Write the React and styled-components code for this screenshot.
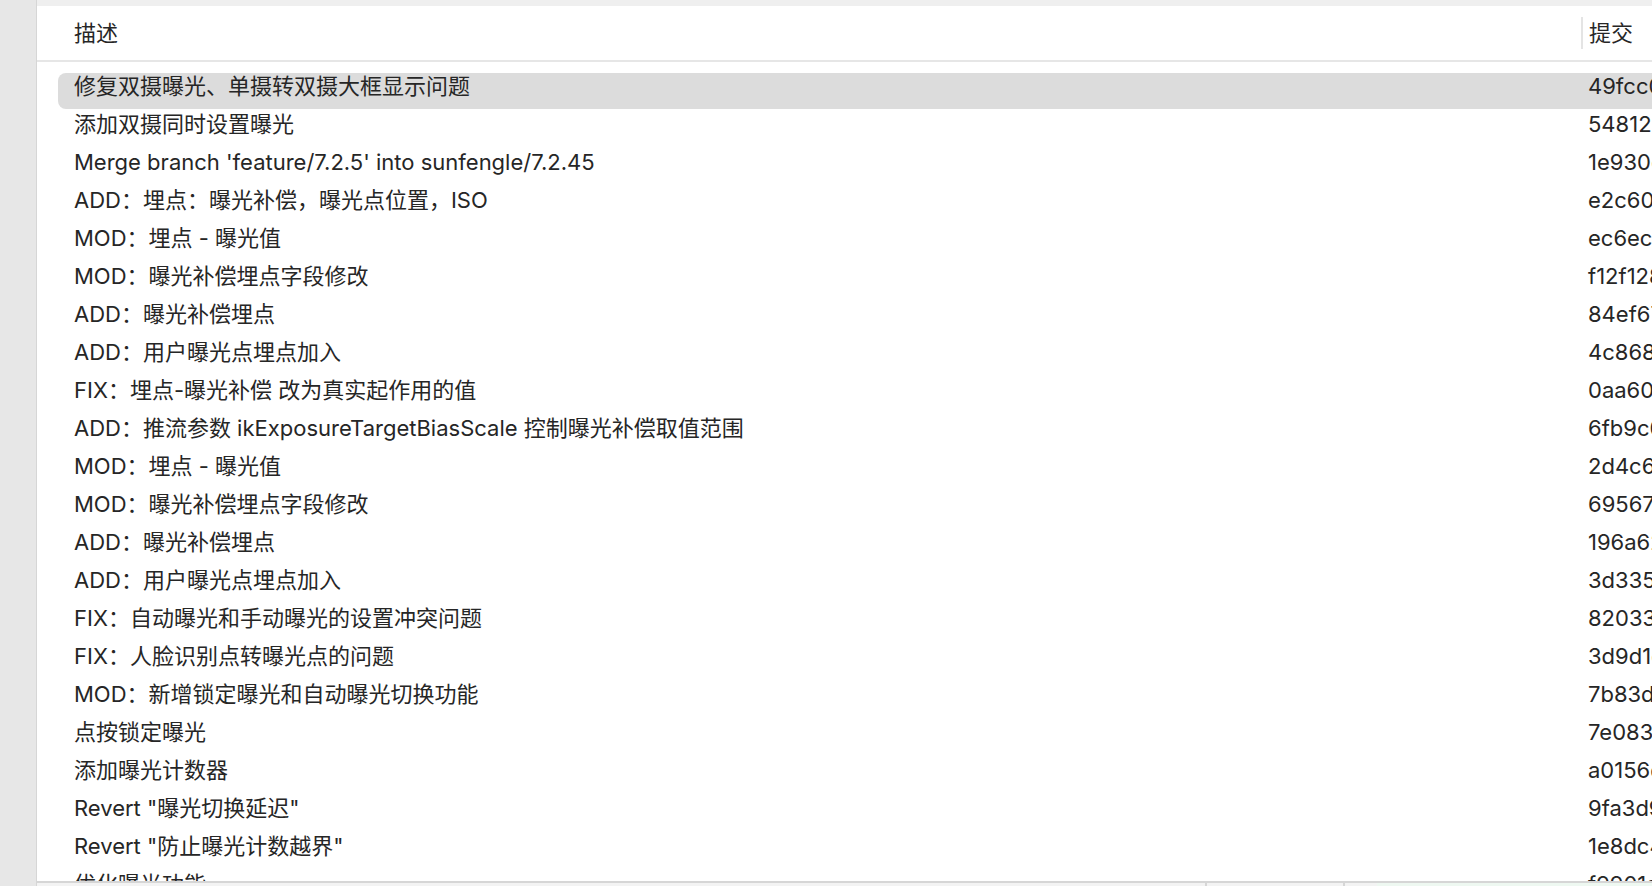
import React from 'react';
import styled, { createGlobalStyle } from 'styled-components';

const commits = [
  { message: '修复双摄曝光、单摄转双摄大框显示问题', hash: '49fcc0a1' },
  { message: '添加双摄同时设置曝光', hash: '54812e7b' },
  { message: "Merge branch 'feature/7.2.5' into sunfengle/7.2.45", hash: '1e930c4d' },
  { message: 'ADD：埋点：曝光补偿，曝光点位置，ISO', hash: 'e2c60f9a' },
  { message: 'MOD：埋点 - 曝光值', hash: 'ec6ec3b1' },
  { message: 'MOD：曝光补偿埋点字段修改', hash: 'f12f1287' },
  { message: 'ADD：曝光补偿埋点', hash: '84ef67c2' },
  { message: 'ADD：用户曝光点埋点加入', hash: '4c8688d0' },
  { message: 'FIX：埋点-曝光补偿 改为真实起作用的值', hash: '0aa60b5e' },
  { message: 'ADD：推流参数 ikExposureTargetBiasScale 控制曝光补偿取值范围', hash: '6fb9c0a3' },
  { message: 'MOD：埋点 - 曝光值', hash: '2d4c6e19' },
  { message: 'MOD：曝光补偿埋点字段修改', hash: '695671fd' },
  { message: 'ADD：曝光补偿埋点', hash: '196a62c8' },
  { message: 'ADD：用户曝光点埋点加入', hash: '3d3357ab' },
  { message: 'FIX：自动曝光和手动曝光的设置冲突问题', hash: '8203340e' },
  { message: 'FIX：人脸识别点转曝光点的问题', hash: '3d9d1c62' },
  { message: 'MOD：新增锁定曝光和自动曝光切换功能', hash: '7b83d0f4' },
  { message: '点按锁定曝光', hash: '7e0835b9' },
  { message: '添加曝光计数器', hash: 'a0156d27' },
  { message: 'Revert "曝光切换延迟"', hash: '9fa3d9e0' },
  { message: 'Revert "防止曝光计数越界"', hash: '1e8dc4a6' },
  { message: '优化曝光功能', hash: 'f9901a3c' },
];

const App = () => {
  return (
    <>
      <GlobalStyle />
      <Page>
        <Sidebar />
        <Main>
          <TopStrip />
          <Header>
            <HeaderCell>描述</HeaderCell>
            <HeaderCell divider>提交</HeaderCell>
          </Header>
          <List>
            {commits.map((commit, i) => (
              <Row key={i} selected={i === 0}>
                <Message>{commit.message}</Message>
                <Hash>{commit.hash}</Hash>
              </Row>
            ))}
          </List>
          <BottomPane>
            <PaneCell />
            <PaneCell divider />
            <PaneCell divider />
            <PaneCell tint />
          </BottomPane>
        </Main>
      </Page>
    </>
  );
};

const GlobalStyle = createGlobalStyle`
  html, body {
    margin: 0;
    padding: 0;
    background: #ffffff;
  }

  body {
    font-family: Inter, 'Noto Sans CJK SC', sans-serif;
    color: #262626;
  }
`;

const Page = styled.div`
  display: flex;
  width: 1652px;
  height: 886px;
  overflow: hidden;
`;

const Sidebar = styled.div`
  width: 36px;
  flex-shrink: 0;
  background: #e7e7e7;
  border-right: 1px solid #d6d6d6;
`;

const Main = styled.div`
  flex: 1;
  display: flex;
  flex-direction: column;
  min-width: 0;
`;

const TopStrip = styled.div`
  height: 6px;
  background: #efefef;
`;

const Header = styled.div`
  display: grid;
  grid-template-columns: 1fr 71px;
  align-items: center;
  height: 54px;
  border-bottom: 2px solid #e6e6e6;
`;

const HeaderCell = styled.div`
  font-size: 22px;
  line-height: 32px;
  padding-left: ${props => (props.divider ? '6px' : '37px')};
  border-left: ${props => (props.divider ? '2px solid #e4e4e4' : 'none')};
  white-space: nowrap;
  overflow: hidden;
`;

const List = styled.div`
  flex: 1;
  display: flex;
  flex-direction: column;
  padding-top: 10px;
  overflow: hidden;
`;

const Row = styled.div`
  display: grid;
  grid-template-columns: 1fr 71px;
  align-items: center;
  flex-shrink: 0;
  box-sizing: border-box;
  height: 36px;
  margin: 1px 0 1px 21px;
  padding-bottom: 10px;
  border-radius: 8px 0 0 8px;
  background: ${props => (props.selected ? '#dcdcdc' : 'transparent')};
  font-size: 22px;
  line-height: 26px;
`;

const Message = styled.div`
  height: 26px;
  padding-left: 16px;
  white-space: nowrap;
  overflow: hidden;
`;

const Hash = styled.div`
  height: 26px;
  padding-left: 7px;
  white-space: nowrap;
  overflow: hidden;
`;

const BottomPane = styled.div`
  display: grid;
  grid-template-columns: 1168px 138px 34px 1fr;
  height: 3px;
  flex-shrink: 0;
  border-top: 2px solid #d6d6d6;
  background: #f3f3f3;
`;

const PaneCell = styled.div`
  border-left: ${props => (props.divider ? '2px solid #d6d6d6' : 'none')};
  background: ${props => (props.tint ? '#eef8f1' : 'transparent')};
`;

export default App;
